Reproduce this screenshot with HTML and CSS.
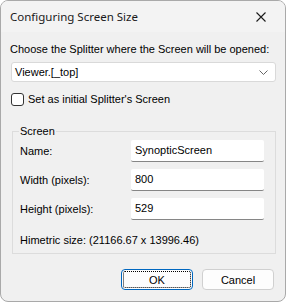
FILE: index.html
```html
<!DOCTYPE html>
<html>
<head>
    <title>Configuring Screen Size</title>
    <meta charset="UTF-8">
    <link rel="stylesheet" href="styles.css">
</head>
<body>
    <div class="window">
        <div class="titlebar">
            <span class="title">Configuring Screen Size</span>
            <button class="close" aria-label="Close">
                <svg width="10" height="10" viewBox="0 0 10 10">
                    <path d="M0.5 0.5 L9.5 9.5 M9.5 0.5 L0.5 9.5" stroke="#1a1a1a" stroke-width="1.1"/>
                </svg>
            </button>
        </div>

        <div class="content">
            <div class="label-top">Choose the Splitter where the Screen will be opened:</div>
            <div class="combo">
                <span>Viewer.[_top]</span>
                <svg width="9" height="5" viewBox="0 0 9 5">
                    <path d="M0.5 0.5 L4.5 4.5 L8.5 0.5" fill="none" stroke="#666" stroke-width="1"/>
                </svg>
            </div>

            <label class="check">
                <span class="box"></span>
                <span>Set as initial Splitter's Screen</span>
            </label>

            <fieldset class="group">
                <legend>Screen</legend>
                <div class="row">
                    <span class="row-label">Name:</span>
                    <div class="field">SynopticScreen</div>
                </div>
                <div class="row">
                    <span class="row-label">Width (pixels):</span>
                    <div class="field">800</div>
                </div>
                <div class="row">
                    <span class="row-label">Height (pixels):</span>
                    <div class="field">529</div>
                </div>
                <div class="himetric">Himetric size: (21166.67 x 13996.46)</div>
            </fieldset>

            <div class="buttons">
                <button class="btn default">OK</button>
                <button class="btn">Cancel</button>
            </div>
        </div>
    </div>
</body>
</html>
```

FILE: styles.css
```css
body {
    margin: 0;
    background: #ffffff;
    font-family: "Liberation Sans", Arial, sans-serif;
    font-size: 11px;
    line-height: 16px;
    color: #000;
}

.window {
    width: 284px;
    height: 300px;
    border: 1px solid #a9a9a9;
    border-radius: 8px;
    background: #f0f0f0;
    overflow: hidden;
    display: flex;
    flex-direction: column;
}

.titlebar {
    height: 31px;
    flex-shrink: 0;
    background: #f3f3f3;
    display: flex;
    align-items: center;
    justify-content: space-between;
    padding: 0 0 0 9px;
}

.title {
    font-family: "Noto Sans", sans-serif;
    font-size: 11.5px;
    color: #1a1a1a;
}

.close {
    background: none;
    border: none;
    width: 46px;
    height: 31px;
    display: flex;
    align-items: center;
    justify-content: center;
    padding: 0 2px 0 0;
}

.content {
    padding: 9px 9px 0 9px;
    display: flex;
    flex-direction: column;
}

.label-top {
    white-space: nowrap;
}

.combo {
    margin: 5px 0 0 1px;
    height: 18px;
    border: 1px solid #d9d9d9;
    border-radius: 3px;
    background: #fff;
    display: flex;
    align-items: center;
    justify-content: space-between;
    padding: 0 7px 0 3px;
}

.check {
    margin: 9px 0 0 1px;
    display: flex;
    align-items: center;
    gap: 4px;
}

.box {
    width: 11px;
    height: 11px;
    border: 1px solid #333;
    border-radius: 3px;
    background: #fff;
}

.group {
    margin: 16px 0 0 2px;
    padding: 1px 11px 0 7px;
    border: 1px solid #dcdcdc;
    height: 131px;
    box-sizing: border-box;
}

.group legend {
    padding: 0 1px;
    margin-left: -1px;
}

.row {
    display: flex;
    align-items: center;
    justify-content: space-between;
    height: 22px;
    margin-top: 7px;
}

.row:first-of-type {
    margin-top: 0;
}

.field {
    width: 133px;
    height: 22px;
    background: #fff;
    border-bottom: 1px solid #868686;
    border-radius: 2px;
    padding-left: 4px;
    line-height: 21px;
    box-sizing: border-box;
}

.himetric {
    margin-top: 12px;
}

.buttons {
    display: flex;
    justify-content: flex-end;
    gap: 9px;
    margin: 15px 2px 0 0;
}

.btn {
    width: 72px;
    height: 21px;
    font-family: inherit;
    font-size: 11px;
    background: #fdfdfd;
    border: 1px solid #d0d0d0;
    border-radius: 4px;
    padding: 0;
    color: #000;
}

.btn.default {
    border: 1px solid #0067c0;
    outline: 1px dotted #000;
    outline-offset: -3px;
}
```
